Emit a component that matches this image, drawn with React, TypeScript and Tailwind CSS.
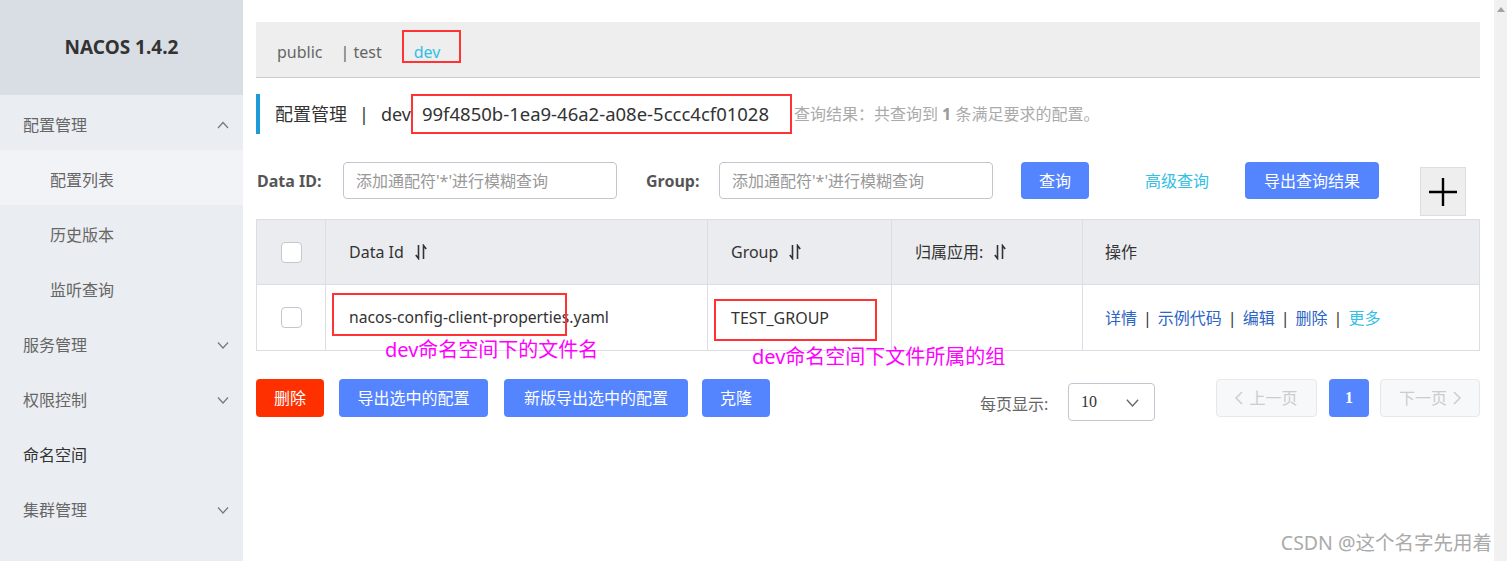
import React from "react";

const font = "font-['Noto_Sans','Noto_Sans_CJK_SC',sans-serif]";

const menu = [
  { label: "配置管理", arrow: "up", sub: false, active: false, dark: false },
  { label: "配置列表", arrow: null, sub: true, active: true, dark: false },
  { label: "历史版本", arrow: null, sub: true, active: false, dark: false },
  { label: "监听查询", arrow: null, sub: true, active: false, dark: false },
  { label: "服务管理", arrow: "down", sub: false, active: false, dark: false },
  { label: "权限控制", arrow: "down", sub: false, active: false, dark: false },
  { label: "命名空间", arrow: null, sub: false, active: false, dark: true },
  { label: "集群管理", arrow: "down", sub: false, active: false, dark: false },
];

function Chevron({ dir, className }: { dir: "up" | "down"; className?: string }) {
  return (
    <svg viewBox="0 0 12 8" className={className} fill="none" stroke="currentColor" strokeWidth="1.2">
      {dir === "up" ? <path d="M1 7 L6 1.5 L11 7" /> : <path d="M1 1.5 L6 7 L11 1.5" />}
    </svg>
  );
}

function SortIcon() {
  return (
    <svg viewBox="0 0 12 16" className="ml-[11px] h-[16px] w-[12px]" fill="none" stroke="#333" strokeWidth="1.6">
      <path d="M3.5 1 V14.5 L0.8 11" />
      <path d="M8.5 15 V1.5 L11.2 5" />
    </svg>
  );
}

function Checkbox() {
  return <div className="h-[21px] w-[21px] rounded-[4px] border border-[#c4c6cf] bg-white" />;
}

export default function App() {
  return (
    <div className={`flex h-[561px] w-[1507px] overflow-hidden bg-white ${font}`}>
      <aside className="w-[243px] shrink-0 bg-[#eaedf1]">
        <div className="flex h-[95px] items-center justify-center bg-[#d9dee4] text-[19px] font-bold text-[#333]">
          NACOS 1.4.2
        </div>
        {menu.map((m) => (
          <div
            key={m.label}
            className={`flex h-[55px] items-center justify-between pr-[14px] pt-[4px] text-[16px] ${
              m.sub ? "pl-[50px]" : "pl-[23px]"
            } ${m.active ? "bg-[#f2f3f7]" : ""} ${m.dark ? "text-[#333]" : "text-[#666]"}`}
          >
            <span>{m.label}</span>
            {m.arrow && (
              <Chevron dir={m.arrow as "up" | "down"} className="h-[8px] w-[12px] text-[#777]" />
            )}
          </div>
        ))}
      </aside>

      <main className="relative flex-1 pl-[13px] pr-[14px] pt-[22px]">
        <div className="flex h-[56px] items-center border-b border-[#ccc] bg-[#eeeeee] pl-[21px] pt-[4px] text-[16px] text-[#666]">
          <span className="mr-[18px]">public</span>
          <span className="mr-[32px]">| test</span>
          <span className="relative text-[#33c0e5]">
            dev
            <span className="absolute left-[-12px] top-[-10px] h-[33px] w-[59px] border-2 border-[#f33]" />
          </span>
        </div>

        <div className="mt-[16px] flex h-[40px] items-center border-l-4 border-[#1c9bd6] pl-[15px] text-[18px] text-[#333]">
          <span>配置管理</span>
          <span className="mx-[12px]">|</span>
          <span>dev</span>
          <span className="flex h-[40px] w-[381px] items-center border-2 border-[#f33] pl-[9px] text-[18.5px]">
            99f4850b-1ea9-46a2-a08e-5ccc4cf01028
          </span>
          <span className="ml-[2px] text-[16px] text-[#aaa]">
            查询结果：共查询到 <b className="text-[#999]">1</b> 条满足要求的配置。
          </span>
        </div>

        <div className="mt-[28px] flex items-start text-[16px]">
          <span className="ml-[1px] flex h-[37px] w-[70px] items-center font-bold text-[#555]">Data ID:</span>
          <div className="ml-[16px] flex h-[37px] w-[274px] items-center rounded-[4px] border border-[#c4c6cf] pl-[12px] text-[#999]">
            添加通配符'*'进行模糊查询
          </div>
          <span className="ml-[29px] flex h-[37px] w-[57px] items-center font-bold text-[#555]">Group:</span>
          <div className="ml-[16px] flex h-[37px] w-[274px] items-center rounded-[4px] border border-[#c4c6cf] pl-[12px] text-[#999]">
            添加通配符'*'进行模糊查询
          </div>
          <button className="ml-[28px] h-[37px] w-[68px] rounded-[4px] bg-[#5584ff] text-white">查询</button>
          <span className="ml-[56px] flex h-[37px] w-[66px] items-center text-[#33c0e5]">高级查询</span>
          <button className="ml-[34px] h-[37px] w-[134px] rounded-[4px] bg-[#5584ff] text-white">导出查询结果</button>
          <div className="ml-[41px] mt-[5px] flex h-[49px] w-[46px] items-center justify-center border border-[#ddd] bg-[#eeeeee]">
            <svg viewBox="0 0 28 28" className="h-[28px] w-[28px]" stroke="#000" strokeWidth="2.4">
              <path d="M0 14 H28 M14 0 V28" />
            </svg>
          </div>
        </div>

        <div className="mt-[3px] grid grid-cols-[69px_382px_184px_191px_1fr] border border-[#dcdee3] text-[16px] text-[#333]">
          <div className="flex h-[64px] items-center justify-center border-r border-[#dcdee3] bg-[#ebecf0]">
            <Checkbox />
          </div>
          <div className="flex h-[64px] items-center border-r border-[#dcdee3] bg-[#ebecf0] pl-[23px]">
            Data Id <SortIcon />
          </div>
          <div className="flex h-[64px] items-center border-r border-[#dcdee3] bg-[#ebecf0] pl-[23px]">
            Group <SortIcon />
          </div>
          <div className="flex h-[64px] items-center border-r border-[#dcdee3] bg-[#ebecf0] pl-[23px]">
            归属应用: <SortIcon />
          </div>
          <div className="flex h-[64px] items-center bg-[#ebecf0] pl-[22px]">操作</div>

          <div className="flex h-[66px] items-center justify-center border-r border-t border-[#dcdee3]">
            <Checkbox />
          </div>
          <div className="relative flex h-[66px] items-center border-r border-t border-[#dcdee3] pl-[23px] text-[15.7px]">
            nacos-config-client-properties.yaml
            <span className="absolute left-[6px] top-[8px] h-[43px] w-[235px] border-2 border-[#f33]" />
            <span className="absolute left-[59px] top-[50px] z-10 whitespace-nowrap text-[20px] text-[#f0f]">
              dev命名空间下的文件名
            </span>
          </div>
          <div className="relative flex h-[66px] items-center border-r border-t border-[#dcdee3] pl-[23px]">
            TEST_GROUP
            <span className="absolute left-[6px] top-[14px] h-[42px] w-[163px] border-2 border-[#f33]" />
            <span className="absolute left-[44px] top-[57px] z-10 whitespace-nowrap text-[20px] text-[#f0f]">
              dev命名空间下文件所属的组
            </span>
          </div>
          <div className="h-[66px] border-r border-t border-[#dcdee3]" />
          <div className="flex h-[66px] items-center border-t border-[#dcdee3] pl-[22px] text-[#2c64c5]">
            <span>详情</span>
            <span className="mx-[6px] text-[#333]">|</span>
            <span>示例代码</span>
            <span className="mx-[6px] text-[#333]">|</span>
            <span>编辑</span>
            <span className="mx-[6px] text-[#333]">|</span>
            <span>删除</span>
            <span className="mx-[6px] text-[#333]">|</span>
            <span className="text-[#33c0e5]">更多</span>
          </div>
        </div>

        <div className="mt-[28px] flex items-start text-[16px]">
          <button className="h-[38px] w-[68px] rounded-[4px] bg-[#ff3000] text-white">删除</button>
          <button className="ml-[15px] h-[38px] w-[149px] rounded-[4px] bg-[#5584ff] text-white">导出选中的配置</button>
          <button className="ml-[16px] h-[38px] w-[184px] rounded-[4px] bg-[#5584ff] text-white">新版导出选中的配置</button>
          <button className="ml-[14px] h-[38px] w-[68px] rounded-[4px] bg-[#5584ff] text-white">克隆</button>

          <span className="ml-auto mt-[13px] w-[73px] text-[#666]">每页显示:</span>
          <div className="ml-[15px] mt-[4px] flex h-[38px] w-[87px] items-center justify-between rounded-[4px] border border-[#c4c6cf] pl-[12px] pr-[14px] font-['Liberation_Serif',serif] text-[#333]">
            <span>10</span>
            <Chevron dir="down" className="h-[9px] w-[15px] text-[#666]" />
          </div>
          <button className="ml-[61px] flex h-[38px] w-[101px] items-center justify-center gap-[6px] rounded-[4px] border border-[#e6e7eb] bg-[#f7f8fa] text-[#ccc]">
            <svg viewBox="0 0 8 14" className="h-[14px] w-[8px]" fill="none" stroke="#ccc" strokeWidth="1.5">
              <path d="M7 1 L1 7 L7 13" />
            </svg>
            上一页
          </button>
          <button className="ml-[12px] h-[38px] w-[40px] rounded-[4px] bg-[#5584ff] font-['Liberation_Serif',serif] font-bold text-white">
            1
          </button>
          <button className="ml-[11px] flex h-[38px] w-[100px] items-center justify-center gap-[6px] rounded-[4px] border border-[#e6e7eb] bg-[#f7f8fa] text-[#ccc]">
            下一页
            <svg viewBox="0 0 8 14" className="h-[14px] w-[8px]" fill="none" stroke="#ccc" strokeWidth="1.5">
              <path d="M1 1 L7 7 L1 13" />
            </svg>
          </button>
        </div>

        <span className="absolute bottom-[4px] right-[2px] whitespace-nowrap text-[19.5px] text-[#aaa]">
          CSDN @这个名字先用着
        </span>
      </main>

      <div className="flex w-[13px] shrink-0 justify-center bg-[#f1f1f1] pt-[7px]">
        <svg viewBox="0 0 8 5" className="h-[5px] w-[8px]" fill="#a3a3a3">
          <path d="M0 5 L4 0 L8 5 Z" />
        </svg>
      </div>
    </div>
  );
}
